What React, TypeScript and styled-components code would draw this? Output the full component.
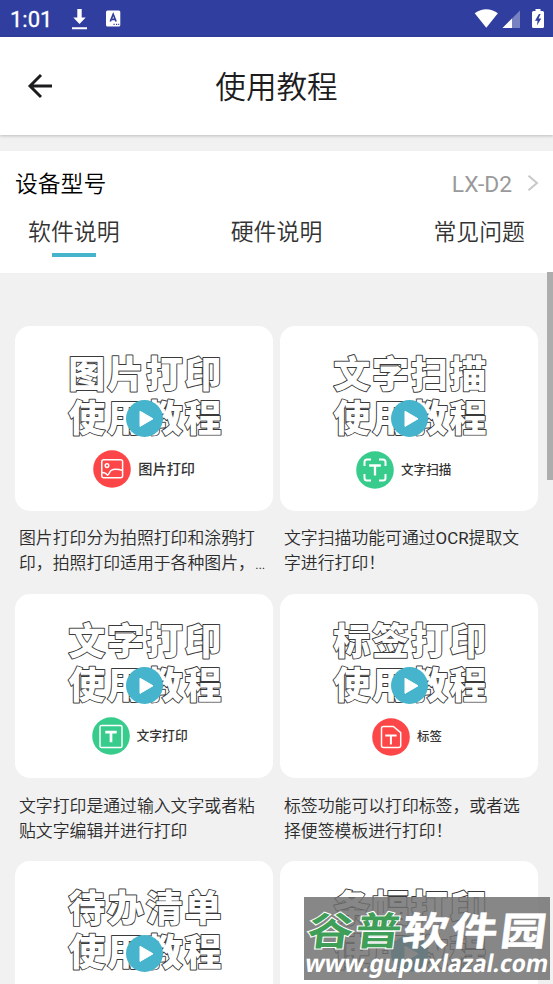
import React from "react";
import styled, { createGlobalStyle } from "styled-components";

const GlobalStyle = createGlobalStyle`
  * { box-sizing: border-box; }
  html, body { margin: 0; padding: 0; background: #f1f1f1; overflow: hidden; }
  body { font-family: Roboto, "Noto Sans CJK SC", sans-serif; color: #333; }
`;

const Screen = styled.div`
  position: relative;
  width: 553px;
  height: 984px;
  overflow: hidden;
  display: flex;
  flex-direction: column;
  background: #f1f1f1;
`;

const StatusBar = styled.div`
  flex: none;
  height: 37px;
  background: #303f9f;
  color: #fff;
  display: flex;
  align-items: center;
  padding: 0 9px 0 10px;
  svg { display: block; flex: none; }
`;

const Clock = styled.span`
  width: 61px;
  font-size: 22px;
  font-weight: 400;
  -webkit-text-stroke: 0.3px #fff;
  line-height: 37px;
  padding-top: 1px;
`;

const StatusIcons = styled.div<{ $end?: boolean }>`
  display: flex;
  align-items: center;
  gap: 18px;
  margin-left: ${(p) => (p.$end ? "auto" : "0")};
`;

const Header = styled.header`
  flex: none;
  height: 98px;
  background: #fff;
  display: grid;
  grid-template-columns: 80px 1fr 80px;
  grid-template-rows: 98px;
  align-items: start;
  box-shadow: 0 1px 3px rgba(0, 0, 0, 0.22);
`;

const BackButton = styled.button`
  border: 0;
  background: none;
  padding: 0 0 0 27px;
  height: 98px;
  display: flex;
  align-items: center;
`;

const Title = styled.h1`
  margin: 0;
  padding-top: 2px;
  font-size: 30.6px;
  font-weight: 350;
  line-height: 98px;
  text-align: center;
  color: #1c1c1e;
`;

const Panel = styled.section`
  flex: none;
  margin-top: 16px;
  height: 122px;
  background: #fff;
`;

const DeviceRow = styled.div`
  height: 62px;
  padding: 4px 13px 0 15px;
  display: flex;
  align-items: center;
  font-size: 22.8px;
  font-weight: 350;
  line-height: 58px;
  color: #000;
  span:first-child { padding-top: 2px; }
`;

const Model = styled.span`
  margin-left: auto;
  padding-top: 2px;
  margin-right: 14px;
  font-weight: 400;
  color: #9a9a9a;
`;

const Tabs = styled.nav`
  display: flex;
  justify-content: space-between;
  padding: 2px 28px 0;
`;

const Tab = styled.div<{ $active?: boolean }>`
  display: flex;
  flex-direction: column;
  align-items: center;
  font-size: 22.9px;
  font-weight: 350;
  line-height: 36px;
  color: #333;
  &::after {
    content: "";
    width: 44px;
    height: 4px;
    margin-top: 2px;
    background: ${(p) => (p.$active ? "#46b4cc" : "transparent")};
  }
`;

const Content = styled.main`
  flex: 1;
  min-height: 0;
  overflow: hidden;
  padding: 53.3px 15px 0;
`;

const Grid = styled.div`
  display: grid;
  grid-template-columns: 258px 258px;
  column-gap: 7px;
  grid-auto-rows: 267.3px;
`;

const Thumb = styled.div`
  position: relative;
  height: 184.6px;
  border-radius: 15px;
  background: #fff;
  overflow: hidden;
  padding-top: 23.5px;
`;

const Lettering = styled.svg`
  display: block;
  width: 258px;
  height: 88px;
  text {
    font-family: "Noto Sans CJK SC", sans-serif;
    font-size: 37px;
    font-weight: 900;
    letter-spacing: 1.7px;
    fill: #fff;
    stroke: #3a3a3a;
    stroke-width: 1.9px;
    stroke-linejoin: round;
    paint-order: stroke fill;
  }
`;

const PlayButton = styled.div`
  position: absolute;
  left: 110.5px;
  top: 73.7px;
  width: 37px;
  height: 37px;
  svg { display: block; }
`;

const BadgeRow = styled.div<{ $x: number; $y: number; $size: number }>`
  display: flex;
  align-items: center;
  gap: 7px;
  height: 38px;
  margin-top: ${(p) => p.$y + 1.5}px;
  padding-left: ${(p) => p.$x}px;
  font-size: ${(p) => p.$size}px;
  font-weight: 500;
  color: #333;
  svg { display: block; flex: none; }
  span { margin-top: -2px; }
`;

const Caption = styled.p`
  margin: 15.5px 0 0 4px;
  font-size: 16.85px;
  font-weight: 350;
  line-height: 25px;
  color: #2c2c2c;
  white-space: pre-line;
`;

const Latin = styled.span`
  font-weight: 400;
`;

const ScrollThumb = styled.div`
  position: absolute;
  right: 0;
  top: 272px;
  width: 6px;
  height: 208px;
  background: #adadad;
`;

const Watermark = styled.div`
  position: absolute;
  left: 304px;
  top: 897px;
  width: 246px;
  height: 83px;
  background: rgba(112, 112, 112, 0.84);
  overflow: hidden;
  svg { display: block; }
`;

type IconKind = "image" | "scan" | "text" | "label";

function BadgeIcon({ kind }: { kind: IconKind }) {
  const red = kind === "image" || kind === "label";
  return (
    <svg width="38" height="38" viewBox="0 0 38 38" fill="none" stroke="#fff" strokeWidth="1.5">
      <circle cx="19" cy="19" r="18.8" fill={red ? "#fd4647" : "#37cc8c"} stroke="none" />
      {kind === "image" && (
        <>
          <rect x="8.8" y="9.8" width="20.8" height="18" rx="2" />
          <circle cx="14" cy="15.6" r="1.8" />
          <path d="M9 22.5c2 0 4 .5 5.5 2.7 2-.5 1.5-3.7 4-5 3-1.8 7-1 11.5.3" />
        </>
      )}
      {kind === "scan" && (
        <>
          <path d="M8.5 15v-4q0-2.5 2.5-2.5h4M23 8.5h4q2.5 0 2.5 2.5v4M29.5 23v4q0 2.5-2.5 2.5h-4M15 29.5h-4q-2.5 0-2.5-2.5v-4" strokeWidth="2" />
          <path d="M13.2 14.5h11.6M19 14.5v10" strokeWidth="2.3" />
        </>
      )}
      {kind === "text" && (
        <>
          <rect x="8" y="8.5" width="22" height="22" rx="1.6" />
          <path d="M13.3 15.2h11.4M19 15.2v10" strokeWidth="2.7" />
        </>
      )}
      {kind === "label" && (
        <>
          <path d="M11.5 8.5h9.8l7.4 6.2v12.8q0 2-2 2H11.5q-2 0-2-2v-17q0-2 2-2Z" />
          <path d="M13.2 17.5h11.4M18.9 17.5v9" strokeWidth="2" />
        </>
      )}
    </svg>
  );
}

interface Lesson {
  name: string;
  label?: string;
  icon?: IconKind;
  x?: number;
  y?: number;
  size?: number;
  text?: string;
}

const lessons: Lesson[] = [
  { name: "图片打印", label: "图片打印", icon: "image", x: 78.3, y: 11, size: 14.2, text: "图片打印分为拍照打印和涂鸦打\n印，拍照打印适用于各种图片，…" },
  { name: "文字扫描", label: "文字扫描", icon: "scan", x: 76, y: 11.3, size: 12.6, text: "文字扫描功能可通过OCR提取文\n字进行打印！" },
  { name: "文字打印", label: "文字打印", icon: "text", x: 76.5, y: 10, size: 12.8, text: "文字打印是通过输入文字或者粘\n贴文字编辑并进行打印" },
  { name: "标签打印", label: "标签", icon: "label", x: 92, y: 11.3, size: 12.4, text: "标签功能可以打印标签，或者选\n择便签模板进行打印！" },
  { name: "待办清单" },
  { name: "条幅打印" },
];

function LessonCard({ lesson }: { lesson: Lesson }) {
  return (
    <article>
      <Thumb>
        <Lettering viewBox="0 0 258 88">
          <text x="53.3" y="37.5">{lesson.name}</text>
          <text x="53.3" y="81.5">使用教程</text>
        </Lettering>
        {lesson.icon && (
          <BadgeRow $x={lesson.x ?? 0} $y={lesson.y ?? 0} $size={lesson.size ?? 12.6}>
            <BadgeIcon kind={lesson.icon} />
            <span>{lesson.label}</span>
          </BadgeRow>
        )}
        <PlayButton>
          <svg width="37" height="37" viewBox="0 0 37 37">
            <circle cx="18.5" cy="18.5" r="18.5" fill="#46b4cc" />
            <path d="M14 11.2v15.2L27 18.8Z" fill="#fff" stroke="#fff" strokeLinejoin="round" />
          </svg>
        </PlayButton>
      </Thumb>
      {lesson.text && (
        <Caption>
          {lesson.text.split(/([A-Z]+)/).map((part, i) => (i % 2 ? <Latin key={i}>{part}</Latin> : part))}
        </Caption>
      )}
    </article>
  );
}

export default function App() {
  return (
    <Screen>
      <GlobalStyle />
      <StatusBar>
        <Clock>1:01</Clock>
        <StatusIcons>
          <svg width="17" height="22" viewBox="0 0 17 22" fill="#fff">
            <path d="M6.3 1h4.4v8.5h4L8.5 16 2.3 9.5h4ZM1 19.3h15v2H1Z" />
          </svg>
          <svg width="15" height="17" viewBox="0 0 15 17">
            <rect y=".5" width="14.3" height="16" rx="1.5" fill="#fff" />
            <path d="M4.3 11.5 7.2 4.2l2.9 7.3M5.3 9.3h3.8" stroke="#303f9f" strokeWidth="1.7" fill="none" />
            <path d="M7.5 14.3h1.2M10 14.3h1.2M12.2 14.3h1" stroke="#303f9f" strokeWidth="1.2" />
          </svg>
        </StatusIcons>
        <StatusIcons $end>
          <svg width="70" height="22" viewBox="0 0 70 22">
            <path d="M.7 5.2Q12.3-2.7 23.9 5.2L12.3 19.8Z" fill="#fff" />
            <path d="M46 2.5V20H28.5Z" fill="#fff" fillOpacity=".35" />
            <path d="M38 10.5V20h-9.5Z" fill="#fff" />
            <path d="M61.5 1h5v2h2q1.5 0 1.5 1.5v14q0 1.5-1.5 1.5h-9q-1.5 0-1.5-1.5v-14Q58 3 59.5 3h2Z" fill="#fff" />
            <path d="M64.9 6 61 12.8h2.6l-.7 4.7 4.4-7h-2.7l2-4.5Z" fill="#303f9f" />
          </svg>
        </StatusIcons>
      </StatusBar>
      <Header>
        <BackButton aria-label="返回">
          <svg width="26" height="26" viewBox="0 0 26 26" fill="none" stroke="#1c1c1e" strokeWidth="2.9">
            <path d="M25 13H3M14 2 3 13l11 11" />
          </svg>
        </BackButton>
        <Title>使用教程</Title>
      </Header>
      <Panel>
        <DeviceRow>
          <span>设备型号</span>
          <Model>LX-D2</Model>
          <svg width="14" height="18" viewBox="0 0 14 18" fill="none" stroke="#c8c8c8" strokeWidth="2">
            <path d="m2.5 .8 8.5 7.2-8.5 7.2" />
          </svg>
        </DeviceRow>
        <Tabs>
          <Tab $active>软件说明</Tab>
          <Tab>硬件说明</Tab>
          <Tab>常见问题</Tab>
        </Tabs>
      </Panel>
      <Content>
        <Grid>
          {lessons.map((l) => (
            <LessonCard key={l.name} lesson={l} />
          ))}
        </Grid>
      </Content>
      <ScrollThumb />
      <Watermark>
        <svg width="246" height="83" viewBox="0 0 246 83">
          <g transform="translate(6 48) skewX(-7) scale(1 .84)" fontFamily="Noto Sans CJK SC, sans-serif" fontWeight="700" fontSize="46">
            <text x="-4" y="0" textLength="94" fill="#3f9e57" stroke="#fff" strokeWidth="2.5" paintOrder="stroke">谷普</text>
            <text x="91" y="0" textLength="144" fill="#fff" stroke="#fff" strokeWidth=".6">软件园</text>
          </g>
          <g transform="translate(0 75) skewX(-10)">
            <text x="0" y="0" textLength="243" lengthAdjust="spacingAndGlyphs" fontFamily="Noto Sans, sans-serif" fontWeight="700" fontSize="24.5" fill="#fff">www.gupuxlazal.com</text>
          </g>
        </svg>
      </Watermark>
    </Screen>
  );
}
